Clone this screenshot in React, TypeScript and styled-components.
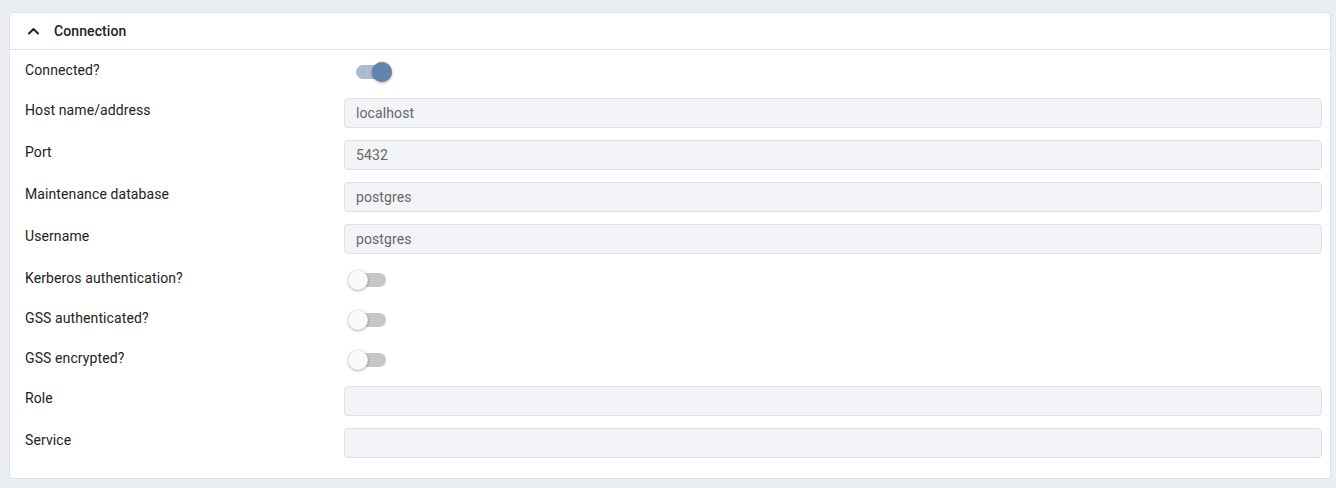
import React from "react";
import styled, { createGlobalStyle } from "styled-components";

const Global = createGlobalStyle`
  html, body { margin: 0; padding: 0; background: #ebeef3; }
  body { font-family: Roboto, "Liberation Sans", sans-serif; font-size: 14px; color: #222; }
  * { box-sizing: border-box; }
`;

const Page = styled.div`
  padding: 12px 5px 9px 9px;
  height: 488px;
`;

const Card = styled.section`
  background: #fff;
  border: 1px solid #dde0e6;
  border-radius: 4px 4px 0 0;
`;

const Header = styled.div`
  display: flex;
  align-items: center;
  height: 37px;
  padding-left: 17px;
  gap: 14px;
  border-bottom: 1px solid #dde0e6;
  font-weight: 500;
  font-size: 14px;
  letter-spacing: 0.1px;
  color: #222;
`;

const Body = styled.div`
  padding: 8px 8px 20px 8px;
  display: flex;
  flex-direction: column;
  gap: 12px;
`;

const Row = styled.div<{ $h: number }>`
  display: grid;
  grid-template-columns: 25% 75%;
  height: ${(p) => p.$h}px;
`;

const Label = styled.label`
  padding-left: 7px;
  line-height: 24px;
  font-size: 14px;
  letter-spacing: 0.1px;
  color: #222;
`;

const Input = styled.div`
  height: 30px;
  background: #f3f4f7;
  border: 1px solid #dde0e6;
  border-radius: 4px;
  padding: 0 11px;
  display: flex;
  align-items: center;
  color: #666;
  font-size: 14px;
  letter-spacing: 0.1px;
`;

const SwitchWrap = styled.div`
  position: relative;
  width: 44px;
  height: 28px;
`;

const Track = styled.span<{ $on: boolean }>`
  position: absolute;
  left: 12px;
  top: 7px;
  width: 30px;
  height: 14px;
  border-radius: 7px;
  background: ${(p) => (p.$on ? "#a9bccd" : "#c6c6c6")};
`;

const Thumb = styled.span<{ $on: boolean }>`
  position: absolute;
  top: 4px;
  left: ${(p) => (p.$on ? "28px" : "4px")};
  width: 20px;
  height: 20px;
  border-radius: 50%;
  background: ${(p) => (p.$on ? "#5f86aa" : "#fafafa")};
  box-shadow: 0 1px 3px rgba(0, 0, 0, 0.3), 0 0 1px rgba(0,0,0,0.2);
`;

const Switch = ({ on }: { on: boolean }) => (
  <SwitchWrap>
    <Track $on={on} />
    <Thumb $on={on} />
  </SwitchWrap>
);

type Field = { label: string; kind: "switch" | "input"; on?: boolean; value?: string };

const fields: Field[] = [
  { label: "Connected?", kind: "switch", on: true },
  { label: "Host name/address", kind: "input", value: "localhost" },
  { label: "Port", kind: "input", value: "5432" },
  { label: "Maintenance database", kind: "input", value: "postgres" },
  { label: "Username", kind: "input", value: "postgres" },
  { label: "Kerberos authentication?", kind: "switch", on: false },
  { label: "GSS authenticated?", kind: "switch", on: false },
  { label: "GSS encrypted?", kind: "switch", on: false },
  { label: "Role", kind: "input", value: "" },
  { label: "Service", kind: "input", value: "" },
];

export default function App() {
  return (
    <Page>
      <Global />
      <Card>
        <Header>
          <svg width="13" height="12" viewBox="0 0 13 12">
            <path d="M2 8.5 L6.5 4 L11 8.5" fill="none" stroke="#222" strokeWidth="2" strokeLinecap="round" strokeLinejoin="round" />
          </svg>
          <span>Connection</span>
        </Header>
        <Body>
          {fields.map((f) => (
            <Row key={f.label} $h={f.kind === "switch" ? 28 : 30}>
              <Label>{f.label}</Label>
              {f.kind === "switch" ? <Switch on={!!f.on} /> : <Input>{f.value}</Input>}
            </Row>
          ))}
        </Body>
      </Card>
    </Page>
  );
}
